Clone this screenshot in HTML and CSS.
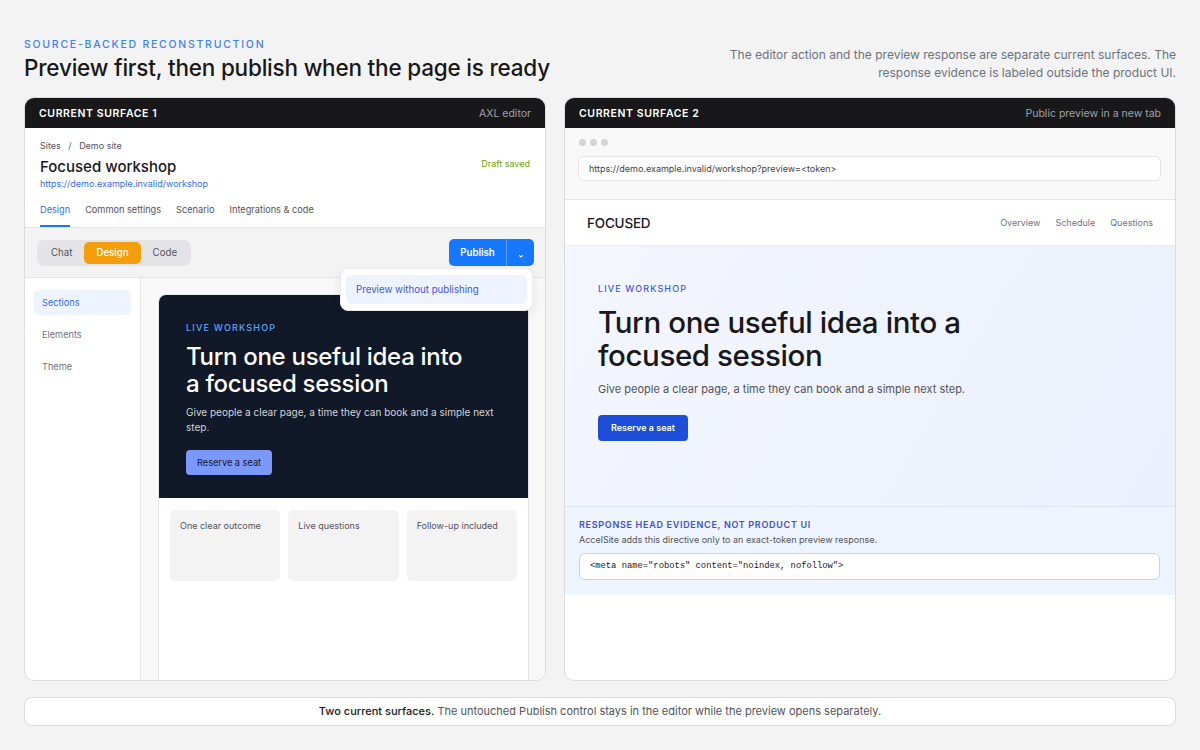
FILE: index.html
```html
<!DOCTYPE html>
<html>
<head>
  <meta charset="UTF-8">
  <title>Preview first, then publish</title>
  <link rel="stylesheet" href="styles.css">
</head>
<body>
  <header class="page-head">
    <div>
      <div class="eyebrow">Source-backed reconstruction</div>
      <h1>Preview first, then publish when the page is ready</h1>
    </div>
    <p class="note">The editor action and the preview response are separate current surfaces. The response evidence is labeled outside the product UI.</p>
  </header>

  <main class="surfaces">
    <!-- surface 1: editor -->
    <section class="surface">
      <div class="surface-head">
        <span class="surface-title">Current surface 1</span>
        <span class="surface-meta">AXL editor</span>
      </div>

      <div class="editor-top">
        <div class="crumbs">Sites <span class="sep">/</span> Demo site</div>
        <div class="title-row">
          <h2>Focused workshop</h2>
          <span class="saved">Draft saved</span>
        </div>
        <a class="site-link">https://demo.example.invalid/workshop</a>
        <nav class="tabs">
          <span class="tab active">Design</span>
          <span class="tab">Common settings</span>
          <span class="tab">Scenario</span>
          <span class="tab">Integrations &amp; code</span>
        </nav>
      </div>

      <div class="toolbar">
        <div class="segmented">
          <span class="seg">Chat</span>
          <span class="seg active">Design</span>
          <span class="seg">Code</span>
        </div>
        <div class="publish">
          <button class="publish-main">Publish</button>
          <button class="publish-more">
            <svg width="8" height="8" viewBox="0 0 8 8"><path d="M2.6 3.6 L4 5 L5.4 3.6" fill="none" stroke="#fff" stroke-width="1.1" stroke-linecap="round" stroke-linejoin="round"/></svg>
          </button>
          <div class="menu">
            <div class="menu-item">Preview without publishing</div>
          </div>
        </div>
      </div>

      <div class="workspace">
        <aside class="sidebar">
          <div class="side-item active">Sections</div>
          <div class="side-item">Elements</div>
          <div class="side-item">Theme</div>
        </aside>
        <div class="canvas">
          <div class="frame">
            <div class="dark-hero">
              <div class="kicker">Live workshop</div>
              <h3>Turn one useful idea into<br>a focused session</h3>
              <p>Give people a clear page, a time they can book and a simple next step.</p>
              <span class="btn-soft">Reserve a seat</span>
            </div>
            <div class="cards">
              <div class="card">One clear outcome</div>
              <div class="card">Live questions</div>
              <div class="card">Follow-up included</div>
            </div>
          </div>
        </div>
      </div>
    </section>

    <!-- surface 2: public preview -->
    <section class="surface">
      <div class="surface-head">
        <span class="surface-title">Current surface 2</span>
        <span class="surface-meta">Public preview in a new tab</span>
      </div>

      <div class="chrome">
        <div class="dots"><i></i><i></i><i></i></div>
        <div class="urlbar">https://demo.example.invalid/workshop?preview=&lt;token&gt;</div>
      </div>

      <div class="site-nav">
        <span class="brand">FOCUSED</span>
        <nav class="site-links">
          <span>Overview</span>
          <span>Schedule</span>
          <span>Questions</span>
        </nav>
      </div>

      <div class="light-hero">
        <div class="kicker">Live workshop</div>
        <h3>Turn one useful idea into a<br>focused session</h3>
        <p>Give people a clear page, a time they can book and a simple next step.</p>
        <span class="btn-solid">Reserve a seat</span>
      </div>

      <div class="evidence">
        <div class="evidence-title">Response head evidence, not product UI</div>
        <div class="evidence-text">AccelSite adds this directive only to an exact-token preview response.</div>
        <code class="codebox">&lt;meta name="robots" content="noindex, nofollow"&gt;</code>
      </div>
    </section>
  </main>

  <footer class="footnote">
    <strong>Two current surfaces.</strong> The untouched Publish control stays in the editor while the preview opens separately.
  </footer>
</body>
</html>
```

FILE: styles.css
```css
* {
  box-sizing: border-box;
}
body {
  margin: 0;
  padding: 37px 24px 0;
  background: #f3f3f3;
  font-family: Inter, "Noto Sans", sans-serif;
  color: #18181b;
}

/* page heading */
.page-head {
  display: flex;
  justify-content: space-between;
  align-items: flex-end;
}
.eyebrow {
  font-size: 10.5px;
  line-height: 15px;
  letter-spacing: 1.75px;
  text-transform: uppercase;
  color: #3b82f6;
  font-weight: 500;
}
h1 {
  margin: 1px 0 0;
  font-size: 22.5px;
  line-height: 30px;
  font-weight: 500;
  letter-spacing: -0.2px;
}
.note {
  margin: 0 0 1px;
  max-width: 450px;
  text-align: right;
  font-size: 12px;
  line-height: 18px;
  color: #6b7280;
}

/* two surfaces */
.surfaces {
  display: grid;
  grid-template-columns: 522fr 612fr;
  gap: 18px;
  margin-top: 14px;
}
.surface {
  height: 584px;
  background: #fff;
  border: 1px solid #dcdcdf;
  border-radius: 10px;
  overflow: hidden;
  display: flex;
  flex-direction: column;
}
.surface-head {
  height: 30px;
  flex-shrink: 0;
  background: #18181b;
  display: flex;
  justify-content: space-between;
  align-items: center;
  padding: 0 14px;
}
.surface-title {
  color: #fff;
  font-size: 10.5px;
  font-weight: 600;
  letter-spacing: 0.6px;
  text-transform: uppercase;
}
.surface-meta {
  color: #a1a1aa;
  font-size: 10.5px;
}

/* editor */
.editor-top {
  padding: 11px 15px 0;
  border-bottom: 1px solid #e5e7eb;
}
.crumbs {
  font-size: 9px;
  line-height: 14px;
  color: #52525b;
}
.crumbs .sep {
  margin: 0 5px;
}
.title-row {
  display: flex;
  justify-content: space-between;
  align-items: flex-start;
  margin-top: 4px;
}
h2 {
  margin: 0;
  font-size: 15px;
  line-height: 20px;
  font-weight: 500;
}
.saved {
  font-size: 9px;
  color: #65a30d;
  margin-top: 1px;
}
.site-link {
  display: block;
  font-size: 9px;
  line-height: 14px;
  color: #2f6fed;
}
.tabs {
  display: flex;
  gap: 15px;
  margin-top: 12px;
}
.tab {
  font-size: 9.2px;
  line-height: 14px;
  color: #52525b;
  padding-bottom: 8px;
  border-bottom: 2px solid transparent;
}
.tab.active {
  color: #2f6fed;
  border-bottom-color: #1677ff;
}
.toolbar {
  height: 50px;
  flex-shrink: 0;
  background: #f3f3f3;
  border-bottom: 1px solid #e4e4e7;
  display: flex;
  justify-content: space-between;
  align-items: center;
  padding: 0 11px 0 12px;
}
.segmented {
  display: flex;
  background: #e4e4e7;
  border-radius: 7px;
  padding: 2px;
}
.seg {
  font-size: 9.7px;
  line-height: 22px;
  padding: 0 12px;
  color: #52525b;
  border-radius: 5px;
}
.seg.active {
  background: #f59e0b;
  color: #fff;
  font-weight: 500;
}
.publish {
  position: relative;
  display: flex;
}
.publish button {
  border: none;
  background: #1677ff;
  color: #fff;
  height: 27px;
  font-family: inherit;
  cursor: pointer;
}
.publish-main {
  width: 57px;
  font-size: 9.7px;
  font-weight: 600;
  border-radius: 5px 0 0 5px;
}
.publish-more {
  width: 28px;
  border-left: 1px solid #5c9dff !important;
  border-radius: 0 5px 5px 0;
  padding: 5px 0 0;
}
.menu {
  position: absolute;
  right: 1px;
  top: 29px;
  width: 193px;
  background: #fff;
  border: 1px solid #ececef;
  border-radius: 8px;
  box-shadow: 0 4px 12px rgba(0, 0, 0, 0.08);
  padding: 6px 5px;
  z-index: 5;
}
.menu-item {
  background: #edf3ff;
  border-radius: 6px;
  padding: 7px 10px;
  font-size: 9.7px;
  line-height: 15px;
  color: #4057d6;
}
.workspace {
  flex: 1;
  display: flex;
  min-height: 0;
}
.sidebar {
  width: 116px;
  flex-shrink: 0;
  border-right: 1px solid #e4e4e7;
  padding: 12px 9px;
  display: flex;
  flex-direction: column;
  gap: 7px;
}
.side-item {
  height: 25px;
  line-height: 25px;
  padding: 0 8px;
  font-size: 9.2px;
  color: #71717a;
  border-radius: 5px;
}
.side-item.active {
  background: #edf3ff;
  color: #2f6fed;
}
.canvas {
  flex: 1;
  background: #f8f8f8;
  padding: 16px 16px 0 17px;
  display: flex;
}
.frame {
  flex: 1;
  background: #fff;
  border: 1px solid #e6e6e9;
  border-bottom: none;
  border-radius: 8px 8px 0 0;
  overflow: hidden;
}
.dark-hero {
  background: #111827;
  padding: 27px 27px 23px;
  color: #fff;
}
.kicker {
  font-size: 9px;
  line-height: 12px;
  letter-spacing: 1.2px;
  text-transform: uppercase;
  font-weight: 500;
  color: #60a5fa;
}
.dark-hero h3 {
  margin: 9px 0 0;
  font-size: 24px;
  line-height: 27px;
  font-weight: 500;
  letter-spacing: -0.3px;
}
.dark-hero p {
  margin: 8px 0 0;
  font-size: 10px;
  line-height: 15px;
  color: #d4d4d8;
}
.btn-soft {
  display: inline-block;
  margin-top: 15px;
  background: #7b98ff;
  color: #111827;
  font-size: 9.2px;
  line-height: 25px;
  padding: 0 11px;
  border-radius: 4px;
}
.cards {
  display: grid;
  grid-template-columns: repeat(3, 1fr);
  gap: 8px;
  padding: 12px 11px;
}
.card {
  height: 71px;
  background: #f3f3f4;
  border-radius: 5px;
  padding: 10px 10px;
  font-size: 9px;
  line-height: 12px;
  color: #52525b;
}

/* public preview */
.chrome {
  background: #f8f8f8;
  padding: 11px 14px 18px 13px;
  border-bottom: 1px solid #e4e4e7;
}
.dots {
  display: flex;
  gap: 4px;
  height: 7px;
  padding-left: 1px;
}
.dots i {
  width: 7px;
  height: 7px;
  border-radius: 50%;
  background: #d4d4d8;
}
.urlbar {
  margin-top: 10px;
  height: 25px;
  line-height: 23px;
  background: #fff;
  border: 1px solid #e4e4e7;
  border-radius: 6px;
  padding: 0 10px;
  font-size: 9px;
  color: #3f3f46;
}
.site-nav {
  height: 46px;
  flex-shrink: 0;
  display: flex;
  justify-content: space-between;
  align-items: center;
  padding: 0 22px;
  border-bottom: 1px solid #e8ecf4;
}
.brand {
  font-size: 13.5px;
  font-weight: 500;
  letter-spacing: -0.2px;
}
.site-links {
  display: flex;
  gap: 15px;
  font-size: 9px;
  color: #71717a;
}
.light-hero {
  height: 260px;
  flex-shrink: 0;
  background: linear-gradient(120deg, #f4f6fd 0%, #eaf0fc 100%);
  padding: 37px 34px 0 33px;
}
.light-hero .kicker {
  color: #3b5bdb;
  font-size: 9px;
  letter-spacing: 1.1px;
}
.light-hero h3 {
  margin: 11px 0 0;
  font-size: 29.5px;
  line-height: 33px;
  font-weight: 500;
  letter-spacing: -0.4px;
}
.light-hero p {
  margin: 9px 0 0;
  font-size: 11px;
  line-height: 16px;
  color: #52525b;
}
.btn-solid {
  display: inline-block;
  margin-top: 18px;
  background: #1d4ed8;
  color: #fff;
  font-size: 9px;
  font-weight: 600;
  line-height: 26px;
  padding: 0 13px;
  border-radius: 4px;
}
.evidence {
  background: #eef5ff;
  border-top: 1px solid #dbe5f6;
  padding: 11px 15px 15px 14px;
}
.evidence-title {
  font-size: 9px;
  line-height: 13px;
  font-weight: 600;
  letter-spacing: 0.7px;
  text-transform: uppercase;
  color: #3b4fd8;
}
.evidence-text {
  margin-top: 2px;
  font-size: 9px;
  line-height: 13px;
  color: #52525b;
}
.codebox {
  display: block;
  margin-top: 7px;
  height: 27px;
  line-height: 25px;
  background: #fff;
  border: 1px solid #bcd6fb;
  border-radius: 6px;
  padding: 0 10px;
  font-family: "Liberation Mono", "DejaVu Sans Mono", monospace;
  font-size: 8.8px;
  color: #18181b;
}

/* footer note */
.footnote {
  margin-top: 16px;
  height: 29px;
  line-height: 27px;
  background: #fff;
  border: 1px solid #dcdcdf;
  border-radius: 8px;
  text-align: center;
  font-size: 11px;
  color: #52525b;
}
.footnote strong {
  color: #18181b;
  font-weight: 500;
}
```
